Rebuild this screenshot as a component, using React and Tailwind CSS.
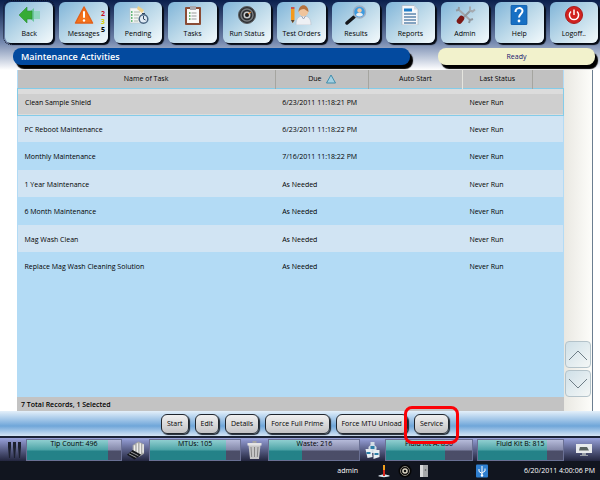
const NAV = [
  { label: "Back", icon: BackIcon, focused: true },
  { label: "Messages", icon: MessagesIcon, counts: true },
  { label: "Pending", icon: PendingIcon },
  { label: "Tasks", icon: TasksIcon },
  { label: "Run Status", icon: DialIcon },
  { label: "Test Orders", icon: OrdersIcon },
  { label: "Results", icon: ResultsIcon },
  { label: "Reports", icon: ReportsIcon },
  { label: "Admin", icon: AdminIcon },
  { label: "Help", icon: HelpIcon },
  { label: "Logoff..", icon: LogoffIcon },
]

const TASKS = [
  { name: "Clean Sample Shield", due: "6/23/2011 11:18:21 PM", status: "Never Run" },
  { name: "PC Reboot Maintenance", due: "6/23/2011 11:18:22 PM", status: "Never Run" },
  { name: "Monthly Maintenance", due: "7/16/2011 11:18:22 PM", status: "Never Run" },
  { name: "1 Year Maintenance", due: "As Needed", status: "Never Run" },
  { name: "6 Month Maintenance", due: "As Needed", status: "Never Run" },
  { name: "Mag Wash Clean", due: "As Needed", status: "Never Run" },
  { name: "Replace Mag Wash Cleaning Solution", due: "As Needed", status: "Never Run" },
]

const ACTIONS = ["Start", "Edit", "Details", "Force Full Prime", "Force MTU Unload"]

function BackIcon() {
  return (
    <svg viewBox="0 0 24 20" className="h-5 w-6">
      <path d="M15 6h8v8h-8z" fill="#8fd6c0" />
      <path d="M9 10 17 3v14z" fill="#6cc79d" />
      <path d="M2 10 10 2v4h5v8h-5v4z" fill="#35ab34" stroke="#2a8f35" strokeWidth=".6" />
    </svg>
  )
}

function MessagesIcon() {
  return (
    <svg viewBox="0 0 24 20" className="h-5 w-6">
      <path d="M12 2 20.500 18h-17z" fill="#f4731c" stroke="#e2611a" strokeWidth="1.500" strokeLinejoin="round" />
      <path d="M12 7v5" stroke="#fff" strokeWidth="2" strokeLinecap="round" />
      <circle cx="12" cy="15.500" r="1.200" fill="#fff" />
    </svg>
  )
}

function PendingIcon() {
  return (
    <svg viewBox="0 0 24 20" className="h-5 w-6">
      <path d="M4 3h10l4 3v12H4z" fill="#f4f6f4" stroke="#b9c6cc" strokeWidth=".6" />
      <path d="m12 1 6 4-2 3-5-4z" fill="#ecd28c" />
      <path d="M8 7h6M8 10h5M8 13h4M8 16h4" stroke="#a9b8ae" />
      <path d="M5 7h1.500M5 10h1.500M5 13h1.500M5 16h1.500" stroke="#3aa657" strokeWidth="1.500" />
      <circle cx="17.500" cy="14" r="4.300" fill="#dfeaf4" stroke="#4a6683" strokeWidth="1.500" />
      <path d="M17.500 14V11M17.500 14l2 1M16 8.500h3" stroke="#2f4660" />
    </svg>
  )
}

function TasksIcon() {
  return (
    <svg viewBox="0 0 24 20" className="h-5 w-6">
      <rect x="4" y="2" width="16" height="18" rx="1" fill="#8a4b35" />
      <path d="M6 4h12v14H6z" fill="#fafafa" />
      <path d="M9 1h6v4H9z" fill="#a8a8ae" />
      <path d="M10.500 8h5M10.500 11h5M10.500 14h5" stroke="#999" />
      <path d="M8 8h1.500M8 11h1.500M8 14h1.500" stroke="#47a34b" strokeWidth="1.500" />
    </svg>
  )
}

function DialIcon() {
  return (
    <svg viewBox="0 0 24 20" className="h-5 w-6">
      <circle cx="12" cy="10" r="8.500" fill="#2c2e31" stroke="#5a5d60" />
      <circle cx="12" cy="10" r="6" fill="none" stroke="#777b7e" strokeWidth="1.500" />
      <circle cx="12" cy="10" r="3.500" fill="#c8cacc" />
      <circle cx="12" cy="10" r="2" fill="#181818" />
      <path d="m13 9 3-2" stroke="#e98628" />
    </svg>
  )
}

function OrdersIcon() {
  return (
    <svg viewBox="0 0 24 20" className="h-5 w-6">
      <path d="M2 4h3.500v11L3.700 18 2 15z" fill="#f39a1d" />
      <path d="M2 2h3.500v2H2z" fill="#c9564b" />
      <path d="M2 15h3.500L3.700 18z" fill="#574235" />
      <path d="M7 20c0-7 3-9 7.500-9s7.500 2 7.500 9z" fill="#eef0f4" stroke="#b9c0cb" strokeWidth=".6" />
      <circle cx="14.500" cy="6.500" r="4.800" fill="#f0c49c" />
      <path d="M9.500 7c0-9 10-9 10 0-2-1-3-3-5-3-2 0-4 1-5 3z" fill="#b5733f" />
      <path d="m12.500 11 2 3 2-3" fill="none" stroke="#9aa4b5" />
    </svg>
  )
}

function ResultsIcon() {
  return (
    <svg viewBox="0 0 24 20" className="h-5 w-6">
      <path d="m10 12-7 6" stroke="#15171b" strokeWidth="3.500" strokeLinecap="round" />
      <circle cx="15.500" cy="7" r="6" fill="#3d9be0" stroke="#9fb0c4" strokeWidth="1.500" />
      <circle cx="15.500" cy="5.500" r="2.200" fill="#f2c7a2" />
      <path d="M12 10c.5-3 6.500-3 7 0-2 2-5 2-7 0z" fill="#e6eef6" />
    </svg>
  )
}

function ReportsIcon() {
  return (
    <svg viewBox="0 0 24 20" className="h-5 w-6">
      <path d="M4 .5h12l4 4V20H4z" fill="#f5f7fa" stroke="#aab4bf" strokeWidth=".7" />
      <path d="M16 .5v4h4" fill="#d3dae2" />
      <path d="M6 5h8" stroke="#1f7ec9" strokeWidth="3" />
      <path d="M6 9h12M6 12h12M6 15h12M6 18h12" stroke="#5d87ad" strokeWidth="1.300" />
    </svg>
  )
}

function AdminIcon() {
  return (
    <svg viewBox="0 0 24 20" className="h-5 w-6">
      <path d="m5 4 12 11" stroke="#a3a8ae" strokeWidth="2" />
      <path d="M3 5.500 5.500 5l.5-3M16 18l1-3 3-1" fill="none" stroke="#93999f" strokeWidth="2" />
      <path d="m18 5-7 7" stroke="#92979c" strokeWidth="2" />
      <path d="M17 1.500v4l2.500 1L22 4.500" fill="none" stroke="#a5aab0" strokeWidth="2" />
      <path d="m8.500 13.500-2 2.500" stroke="#7c1815" strokeWidth="5.500" strokeLinecap="round" />
    </svg>
  )
}

function HelpIcon() {
  return (
    <svg viewBox="0 0 24 20" className="h-5 w-6">
      <rect x="4" y="0" width="16" height="20" rx="1.500" fill="#1770c4" stroke="#0b519b" strokeWidth=".7" />
      <path d="M8.500 7c0-5 7-5 7-1 0 3-3.500 3-3.500 6.500" fill="none" stroke="#fff" strokeWidth="2" />
      <circle cx="12" cy="16" r="1.400" fill="#fff" />
    </svg>
  )
}

function LogoffIcon() {
  return (
    <svg viewBox="0 0 24 20" className="h-5 w-6">
      <circle cx="12" cy="10" r="8.500" fill="#d1211f" stroke="#a81b1b" />
      <path d="M9 6.500a4.600 4.600 0 1 0 6 0M12 4.500V10" fill="none" stroke="#fff" strokeWidth="1.500" />
    </svg>
  )
}

function TipsIcon() {
  return (
    <svg viewBox="0 0 15 20" className="h-5 w-[15px] shrink-0">
      <path d="M1 2h3v5l-1 11H2L1 7zM6 2h3v5L8 18H7L6 7zM11 2h3v5l-1 11h-1L11 7z" fill="#1d2130" />
    </svg>
  )
}

function MtuIcon() {
  return (
    <svg viewBox="0 0 20 20" className="h-5 w-[19px] shrink-0">
      <path d="m7 5 6-4 6 3v10l-5 3-7-3z" fill="#a9a9a7" />
      <path d="M9 5v8M12 3v11M15 3v12M18 4v9" stroke="#eeeeec" strokeWidth="1.500" />
      <path d="m1 15 6-5 9 5-7 5z" fill="#131519" />
      <path d="m3 14 8 4M5 12l8 4" stroke="#c9c9c9" strokeWidth=".8" />
    </svg>
  )
}

function TrashIcon() {
  return (
    <svg viewBox="0 0 16 20" className="h-5 w-[19px] shrink-0">
      <path d="M2 5h12l-1.500 14h-9z" fill="#c6c6c6" />
      <path d="M1 3h14v2.500H1z" fill="#e4e4e4" />
      <path d="M6 1h4v2H6z" fill="#a2a2a2" />
      <path d="m4.500 7 .7 10M8 7v10M11.500 7l-.7 10" stroke="#858585" />
    </svg>
  )
}

function FluidIcon() {
  return (
    <svg viewBox="0 0 16 20" className="h-5 w-[17px] shrink-0">
      <path d="M6 2h4v3l2 2v6H4V7l2-2z" fill="#d5dee6" />
      <path d="M1 9h6l1 8-5 1zM9 10h6v7l-6 2z" fill="#e7edf2" />
      <path d="M2 12h4v2H2zM10 13h4v2h-4zM6 6h4v3H6z" fill="#2d7fa8" />
    </svg>
  )
}

function MonitorIcon() {
  return (
    <svg viewBox="0 0 24 16" className="h-4 w-6 shrink-0">
      <path d="M8 2h16v9H8z" fill="#e8eaec" />
      <path d="M12 5h7l2 3.500H11z" fill="#5a625e" />
      <path d="M14 11h4v2h-4zM12 13h8v1h-8z" fill="#9a9fa8" />
    </svg>
  )
}

function StatusIcons() {
  return (
    <div className="flex items-center">
      <svg viewBox="0 0 12 14" className="h-[14px] w-3">
        <path d="M0 12c3-2 9-2 12 0-3 1.500-9 1.500-12 0z" fill="#dfe6ee" />
        <path d="M6 2v10" stroke="#d9261c" strokeWidth="2" />
        <path d="M6 1v5" stroke="#f3a11c" strokeWidth="2" />
      </svg>
      <svg viewBox="0 0 14 14" className="ml-2 h-[14px] w-[14px]">
        <circle cx="7" cy="7" r="6.500" fill="#050505" />
        <circle cx="7" cy="7" r="4.500" fill="none" stroke="#8b867b" />
        <circle cx="7" cy="7" r="2.800" fill="#ddd6c4" />
        <circle cx="7" cy="7" r="1.300" fill="#111" />
      </svg>
      <svg viewBox="0 0 8 14" className="ml-2 h-[14px] w-2">
        <path d="M0 1h8v12H0z" fill="#a6a8aa" />
        <path d="M0 1h3v12H0z" fill="#d8d9da" />
        <circle cx="5.500" cy="6" r=".8" fill="#555" />
      </svg>
      <svg viewBox="0 0 12 14" className="ml-12 h-[14px] w-3">
        <rect y=".5" width="12" height="13" rx="1" fill="#2f7fd0" />
        <path d="M6 2v10M3 5v2.500l3 2M9 4.500v2.500L6 9" fill="none" stroke="#fff" />
        <circle cx="6" cy="11.500" r="1.200" fill="#fff" />
      </svg>
    </div>
  )
}

function NavButton({ label, icon: Icon, counts, focused }) {
  return (
    <button
      className={`relative flex h-[41px] flex-col items-center rounded-md bg-linear-to-br from-[#7fb4d8] via-[#bcd9e9] to-[#f4fafc] pt-[3px] shadow-[2px_2px_1px_#050a14] ${
        focused ? "outline-1 outline-offset-1 outline-[#0a1226] outline-dotted" : ""
      }`}
    >
      <Icon />
      <span className="mt-[3px] leading-[12px]">{label}</span>
      {counts && (
        <span className="absolute top-2 right-[3px] flex flex-col leading-[8px] font-bold">
          <span className="text-[#c80d1c]">2</span>
          <span className="text-[#d6cf00]">3</span>
          <span>5</span>
        </span>
      )}
    </button>
  )
}

function Gauge({ label, fill, className }) {
  return (
    <div className={`relative h-[22px] border border-[#6a7094] bg-linear-to-b from-[#b6bbda] from-0% via-[#8387a8] via-50% to-[#4b4d68] to-55% ${className}`}>
      <div
        className="h-full bg-linear-to-b from-[#8fcfd0] from-0% via-[#4aa3a6] via-50% to-[#248288] to-55%"
        style={{ width: `${fill}%` }}
      />
      <span className="absolute inset-x-0 top-0 text-center leading-[8px]">{label}</span>
    </div>
  )
}

function ActionButton({ label }) {
  return (
    <button className="h-5 rounded-md border border-[#20262e] bg-linear-to-b from-[#f0f0f0] to-[#c3c3c5] px-[5px] leading-[12px] whitespace-nowrap shadow-[1px_1px_1px_#20262e]">
      {label}
    </button>
  )
}

export default function App() {
  return (
    <div className="flex min-h-screen flex-col bg-white font-['Open_Sans',sans-serif] text-[7px] leading-[12px] text-black">
      <header className="bg-linear-to-b from-[#0b1f4c] via-[#7488ae] via-60% to-white pb-[5px]">
        <nav className="grid grid-cols-11 gap-[6px] pt-[2px] pr-[2px] pl-[5px]">
          {NAV.map((item) => (
            <NavButton key={item.label} {...item} />
          ))}
        </nav>
        <div className="flex gap-7 pt-[5px] pr-[5px] pl-[13px]">
          <h1 className="flex-[381] rounded-lg bg-[#034a9f] px-2 text-[9px] leading-[17px] font-semibold text-white shadow-[3px_4px_1px_#000]">
            Maintenance Activities
          </h1>
          <div className="flex-[157] rounded-lg bg-[#f2f2cc] text-center leading-[17px] text-[#14146e] shadow-[3px_4px_1px_#000]">
            Ready
          </div>
        </div>
      </header>

      <main className="flex grow pr-[7px] pl-[17px]">
        <section className="flex min-w-0 grow flex-col bg-[#b3dbf5]">
          <table className="w-full table-fixed border-collapse text-left whitespace-nowrap">
            <thead>
              <tr className="h-[18px] bg-[#c1c1c1]">
                <th className="w-[47.2%] border-r border-[#a5a5a0] text-center font-normal">Name of Task</th>
                <th className="w-[17.1%] border-r border-[#a5a5a0] font-normal">
                  <span className="flex items-center justify-center gap-1">
                    Due
                    <svg viewBox="0 0 10 10" className="h-[10px] w-[10px]">
                      <path d="M5 1 9.500 9H.5z" fill="#a3d0e2" stroke="#3f8cab" />
                    </svg>
                  </span>
                </th>
                <th className="w-[17.2%] border-r border-[#e5e5df] text-center font-normal">Auto Start</th>
                <th className="w-[12.8%] border-r border-[#a5a5a0] text-center font-normal">Last Status</th>
                <th></th>
              </tr>
            </thead>
            <tbody>
              {TASKS.map((t, i) => (
                <tr
                  key={t.name}
                  className={
                    i === 0
                      ? "h-[27px] border border-[#84cce9] bg-linear-to-b from-[#dcdcdc] from-22% to-[#cfcfcf] to-22%"
                      : i % 2
                        ? "h-[27px] bg-[#d1e4f3]"
                        : "h-7 bg-[#b3dbf5]"
                  }
                >
                  <td className="pt-[2px] pl-[7px]">{t.name}</td>
                  <td className="pt-[2px] pl-[7px]">{t.due}</td>
                  <td></td>
                  <td className="pt-[2px] pl-[7px]">{t.status}</td>
                  <td></td>
                </tr>
              ))}
            </tbody>
          </table>
          <p className="mt-auto h-[14px] bg-[#c3c3c3] pl-1 leading-[16px] font-semibold">7 Total Records, 1 Selected</p>
        </section>
        <aside className="flex w-[29px] shrink-0 flex-col justify-end gap-[2px] border-r border-[#6b7d90] bg-linear-to-r from-[#e9e8e2] to-[#fdfdfa] px-px pb-[14px]">
          <button aria-label="Scroll up" className="flex h-[27px] items-center justify-center rounded-sm border border-[#b4c3ca] bg-linear-to-br from-[#cfe0e8] to-[#f4f7f6]">
            <svg viewBox="0 0 20 12" className="h-3 w-5">
              <path d="m1 11 9-9 9 9" fill="none" stroke="#6f7e87" />
            </svg>
          </button>
          <button aria-label="Scroll down" className="flex h-[27px] items-center justify-center rounded-sm border border-[#b4c3ca] bg-linear-to-br from-[#cfe0e8] to-[#f4f7f6]">
            <svg viewBox="0 0 20 12" className="h-3 w-5">
              <path d="m1 1 9 9 9-9" fill="none" stroke="#6f7e87" />
            </svg>
          </button>
        </aside>
      </main>

      <div className="flex h-[27px] items-center justify-center gap-[6px] border-b-2 border-[#1b2337] bg-linear-to-b from-[#e4f0fa] via-[#6fa6d9] via-60% to-[#d5e5f5] pl-[10px]">
        {ACTIONS.map((label) => (
          <ActionButton key={label} label={label} />
        ))}
        <div className="relative">
          <ActionButton label="Service" />
          <div className="pointer-events-none absolute -inset-x-[10px] -top-2 -bottom-[10px] z-10 rounded-lg border-3 border-[#fb0207]" />
        </div>
      </div>

      <div className="flex h-[23px] items-center gap-1 bg-linear-to-b from-[#9aa3dc] to-[#23263f] pr-2 pl-[7px]">
        <TipsIcon />
        <Gauge label="Tip Count: 496" fill={86} className="flex-[96]" />
        <MtuIcon />
        <Gauge label="MTUs: 105" fill={84} className="flex-[92]" />
        <TrashIcon />
        <Gauge label="Waste: 216" fill={36} className="flex-[92]" />
        <FluidIcon />
        <Gauge label="Fluid Kit A: 850" fill={69} className="flex-[87]" />
        <Gauge label="Fluid Kit B: 815" fill={81} className="flex-[87]" />
        <MonitorIcon />
      </div>

      <footer className="flex h-[19px] items-center justify-end bg-[#11151f] pr-[5px] text-white">
        <span className="mr-5">admin</span>
        <StatusIcons />
        <span className="ml-9">6/20/2011 4:00:06 PM</span>
      </footer>
    </div>
  )
}
